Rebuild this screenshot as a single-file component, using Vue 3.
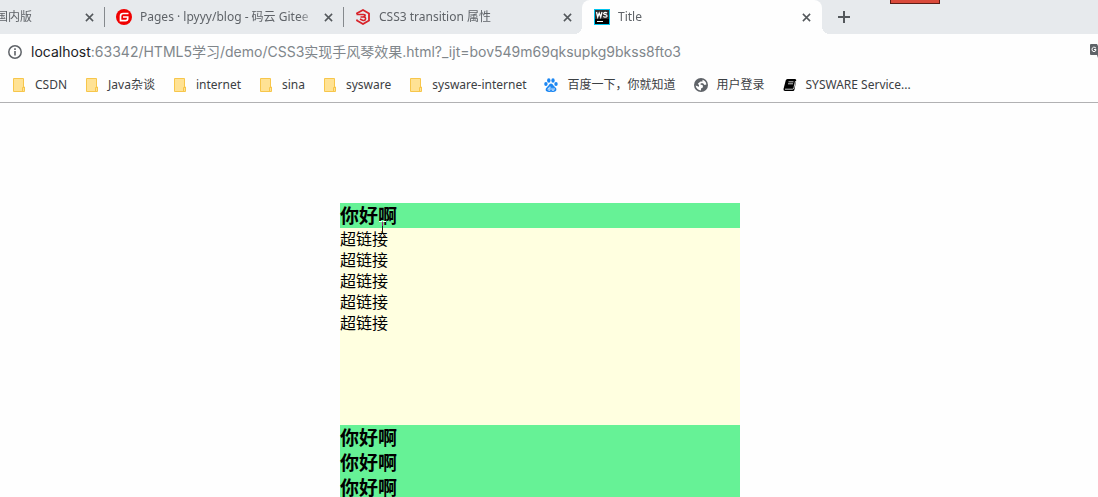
<script setup>
import { ref } from 'vue'

const tabs = [
  { id: 'bing', title: '国内版', icon: '' },
  { id: 'gitee', title: 'Pages · lpyyy/blog - 码云 Gitee', icon: 'gitee' },
  { id: 'css3', title: 'CSS3 transition 属性', icon: 'css3' },
  { id: 'title', title: 'Title', icon: 'webstorm', active: true },
]

const bookmarks = [
  { label: 'CSDN', icon: 'folder' },
  { label: 'Java杂谈', icon: 'folder' },
  { label: 'internet', icon: 'folder' },
  { label: 'sina', icon: 'folder' },
  { label: 'sysware', icon: 'folder' },
  { label: 'sysware-internet', icon: 'folder' },
  { label: '百度一下，你就知道', icon: 'paw' },
  { label: '用户登录', icon: 'globe' },
  { label: 'SYSWARE Service...', icon: 'book' },
]

const open = ref(0)
const sections = [0, 1, 2, 3]
const links = [0, 1, 2, 3, 4]
</script>

<template>
  <div class="browser">
    <nav class="tabs" aria-label="Tabs">
      <div v-for="t in tabs" :key="t.id" class="tab" :class="{ active: t.active, first: !t.icon }">
        <svg v-if="t.icon === 'gitee'" class="fav" viewBox="0 0 16 16">
          <circle cx="8" cy="8" r="8" fill="#f00000" />
          <path d="M12.500 4.500H7.200Q4.500 4.500 4.500 7.200V11.600H9.600Q11.700 11.600 11.700 9.500V8H7" fill="none" stroke="#fff" stroke-width="1.700" />
        </svg>
        <svg v-else-if="t.icon === 'css3'" class="fav" viewBox="0 0 16 16">
          <path d="M2 5V4.200L8 1l6 3.400v7.200L8 15l-6-3.400V10.500" fill="none" stroke="#d8232a" stroke-width="1.800" />
          <path d="M1.500 5.500H8.500Q10.500 5.500 10 7L8.500 8Q11 8 10.500 10T7.500 11.300L5 10M5.500 8H8.500" fill="none" stroke="#d8232a" stroke-width="1.600" />
        </svg>
        <svg v-else-if="t.icon === 'webstorm'" class="fav" viewBox="0 0 16 16">
          <path d="M0 0h16v16H0z" fill="#00c4ee" />
          <path d="M1 1h14v14H1z" fill="#000" />
          <path d="M1 1h14v9H1z" fill="#2c2c2c" />
          <path d="M2.500 3l1.200 5 1.500-4 1.500 4L8 3M13 4.200Q12.500 3.500 11.200 3.500 9.500 3.600 9.700 4.800 10 5.500 11.500 5.700 13.200 6 13 7.200 12.500 8.300 11 8.200 10 8.200 9.300 7.300" fill="none" stroke="#fff" stroke-width="1.300" />
          <path d="M3 12h6v1H3z" fill="#fff" />
        </svg>
        <span class="tab-title">{{ t.title }}</span>
        <button class="close" :aria-label="'Close ' + t.title">
          <svg viewBox="0 0 10 10"><path d="M1 1l8 8M9 1L1 9" stroke="#54585c" stroke-width="1.700" /></svg>
        </button>
      </div>
      <button class="new-tab" aria-label="New tab">
        <svg viewBox="0 0 12 12"><path d="M6 0v12M0 6h12" stroke="#54585c" stroke-width="2" /></svg>
      </button>
      <span class="red-marker"></span>
    </nav>

    <div class="address">
      <svg class="info" viewBox="0 0 14 14">
        <circle cx="7" cy="7" r="6.200" fill="none" stroke="#5f6368" stroke-width="1.500" />
        <path d="M6.200 6h1.600v4.500H6.200zM6.200 3.300h1.600v1.600H6.200z" fill="#5f6368" />
      </svg>
      <span class="url"><span class="host">localhost</span>:63342/HTML5学习/demo/CSS3实现手风琴效果.html?_ijt=bov549m69qksupkg9bkss8fto3</span>
      <button class="translate" aria-label="Translate">
        <svg viewBox="0 0 16 16">
          <path d="M1 0h6l1.500 3H15q1 0 1 1v10H8l-1-3H1q-1 0-1-1V1q0-1 1-1z" fill="#5f6368" />
          <path d="M6 4.200Q5 3 3.600 3.200 2 3.500 2 5.500T4 7.700Q6 7.500 6 5.500H4M8 2.500h1v4M9 5h5M11.500 4v1M13 5q-.5 3-3.500 5" fill="none" stroke="#fff" />
        </svg>
      </button>
    </div>

    <nav class="bookmarks" aria-label="Bookmarks">
      <a v-for="b in bookmarks" :key="b.label" href="#" class="bookmark">
        <svg v-if="b.icon === 'folder'" class="folder" viewBox="0 0 12 14">
          <path d="M.5.500h10V9h1v4.500H.5z" fill="#ffe294" stroke="#f7c64b" />
          <path d="M9.500 13V9.500h2" fill="none" stroke="#f7c64b" />
        </svg>
        <svg v-else-if="b.icon === 'paw'" class="mark" viewBox="0 0 14 14">
          <g fill="#1c87f2">
            <ellipse cx="4.800" cy="2.500" rx="1.700" ry="2.300" />
            <ellipse cx="9" cy="2.500" rx="1.700" ry="2.300" />
            <ellipse cx="1.900" cy="6" rx="1.700" ry="2" />
            <ellipse cx="12" cy="6" rx="1.700" ry="2" />
            <path d="M7 5.500Q8.500 5.500 9.500 7.500L12 10Q13 12 11.500 13.300 10 14.300 7 13.700 4 14.300 2.500 13.300 1 12 2.200 10L4.500 7.500Q5.500 5.500 7 5.500z" />
          </g>
          <path d="M6 8.500v3.700H4.500Q3.500 11.500 4.500 10H6M8 9.800v2.400h2V9.800" fill="none" stroke="#fff" stroke-width=".8" />
        </svg>
        <svg v-else-if="b.icon === 'globe'" class="mark" viewBox="0 0 14 14">
          <circle cx="7" cy="7" r="7" fill="#5f6368" />
          <path d="M8.500 1.800Q12 3 12.400 6.500L10.500 7 9 5.200H7L6.200 6.300 9 7.500 8.800 9.500 7 10.500V12.400Q2.500 12 1.600 7.500L5 8.800V7L3.800 5.800 6.500 3.500H8.500z" fill="#fff" />
        </svg>
        <svg v-else class="mark" viewBox="0 0 14 14">
          <path d="M4.500 1H12q1.500 0 1.200 1.500L11.500 11.500q-.3 1.500-1.500 1.500H2q-1.700 0-1.500-2L2.700 2.500Q3 1 4.500 1z" fill="#000" />
          <path d="M5.500 3.800h5M5 5.800h5M2 11.200h7.500Q10.500 11.200 11 9.500L12.500 3" fill="none" stroke="#fff" stroke-width=".8" />
        </svg>
        <span>{{ b.label }}</span>
      </a>
    </nav>

    <main class="page">
      <div class="accordion">
        <section v-for="s in sections" :key="s">
          <h3><button :aria-expanded="open === s" @click="open = s">你好啊</button></h3>
          <ul v-if="open === s">
            <li v-for="l in links" :key="l"><a href="#">超链接</a></li>
          </ul>
        </section>
        <svg class="cursor" viewBox="0 0 7 17">
          <path d="M0 .5h3M4 .5h3" stroke="#fff" />
          <path d="M3.500 1v4" stroke="#a0147d" />
          <path d="M3.500 5v7" stroke="#222" />
          <path d="M2 13.500h1M4 13.500h1M0 15.500h2M5 15.500h2" stroke="#555" />
        </svg>
      </div>
    </main>
  </div>
</template>

<style>
body {
  margin: 0;
  background: #fefefe;
}
</style>

<style scoped>
.browser {
  height: 100vh;
  overflow: hidden;
  font-family: "Noto Sans", "Noto Sans CJK SC", sans-serif;
  font-size: 12px;
  color: #3c4043;
}
button {
  padding: 0;
  border: 0;
  background: none;
  font: inherit;
  color: inherit;
}
svg {
  display: block;
  flex: none;
}
.tabs {
  position: relative;
  display: flex;
  height: 34px;
  background: #e7eaed;
  overflow: hidden;
}
.tab {
  flex: none;
  display: flex;
  align-items: center;
  gap: 8px;
  box-sizing: border-box;
  width: 239px;
  padding: 0 10px 0 11px;
  color: #5f6368;
  background: linear-gradient(#85898d, #85898d) right center / 1px 20px no-repeat;
}
.tab.first {
  margin-left: -134px;
  padding-left: 130px;
}
.tab:nth-child(3) {
  background: none;
}
.tab.active {
  position: relative;
  width: 240px;
  margin-left: -1px;
  padding-left: 12px;
  border-radius: 8px 8px 0 0;
  background: #fefefe;
}
.tab.active::before,
.tab.active::after {
  content: "";
  position: absolute;
  bottom: 0;
  width: 8px;
  height: 8px;
}
.tab.active::before {
  right: 100%;
  background: radial-gradient(circle at 0 0, transparent 8px, #fefefe 8px);
}
.tab.active::after {
  left: 100%;
  background: radial-gradient(circle at 100% 0, transparent 8px, #fefefe 8px);
}
.fav {
  width: 16px;
  height: 16px;
}
.tab-title {
  flex: 1;
  overflow: hidden;
  white-space: nowrap;
  line-height: 20px;
  mask-image: linear-gradient(to left, transparent, #000 16px);
}
.close {
  flex: none;
  padding: 1px;
}
.close svg {
  width: 9px;
  height: 9px;
}
.new-tab {
  padding: 0 16px;
}
.new-tab svg {
  width: 12px;
  height: 12px;
}
.red-marker {
  position: absolute;
  top: 0;
  left: 890px;
  width: 48px;
  height: 3px;
  border: 1px solid #5c1d16;
  border-top: 0;
  background: #da4a3b;
}
.address {
  display: flex;
  align-items: center;
  gap: 9px;
  height: 36px;
  padding-left: 8px;
  overflow: hidden;
}
.info {
  width: 14px;
  height: 14px;
}
.url {
  flex: 1;
  font-family: Inter, "Noto Sans CJK SC", sans-serif;
  font-size: 14px;
  line-height: 20px;
  white-space: nowrap;
  color: #80868b;
}
.host {
  color: #202124;
}
.translate {
  margin-right: -8px;
}
.translate svg {
  width: 16px;
  height: 16px;
}
.bookmarks {
  display: flex;
  align-items: center;
  gap: 17px;
  height: 30px;
  padding: 0 11px 2px;
  border-bottom: 1px solid #b1b1b3;
}
.bookmark {
  display: flex;
  align-items: center;
  gap: 8px;
  color: inherit;
  text-decoration: none;
  white-space: nowrap;
  line-height: 20px;
}
.folder {
  width: 12px;
  height: 14px;
  margin: 0 2px;
}
.mark {
  width: 14px;
  height: 14px;
  margin: 0 1px;
}
.page {
  padding: 100px 18px 0 0;
}
.accordion {
  position: relative;
  max-width: 400px;
  margin: 0 auto;
  color: #000;
}
h3 {
  margin: 0;
  padding-top: 2px;
  font-size: 19px;
  font-weight: 700;
  line-height: 23px;
  background: #66f296;
}
h3 button {
  display: block;
  width: 100%;
  text-align: left;
}
ul {
  box-sizing: border-box;
  height: 197px;
  margin: 0;
  padding: 1px 0 0;
  list-style: none;
  background: #ffffe0;
  font-size: 16px;
  line-height: 21px;
}
ul a {
  color: inherit;
  text-decoration: none;
}
.cursor {
  position: absolute;
  top: 18px;
  left: 39px;
  width: 7px;
  height: 17px;
}
</style>
